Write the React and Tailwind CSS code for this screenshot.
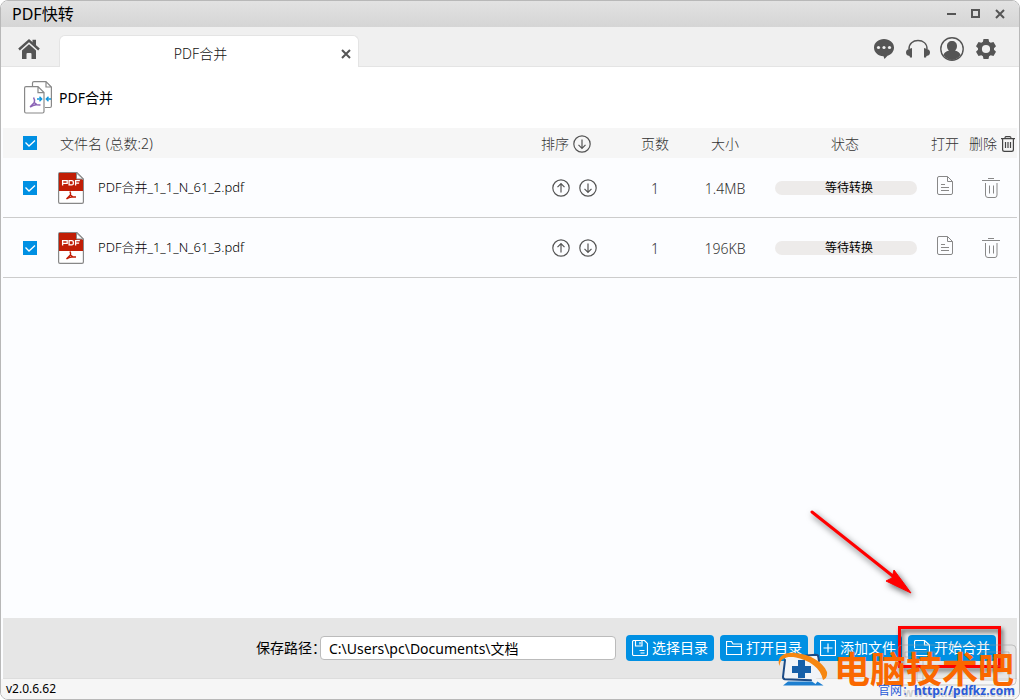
import { useState } from "react";

const files = [
  { name: "PDF合并_1_1_N_61_2.pdf", pages: 1, size: "1.4MB" },
  { name: "PDF合并_1_1_N_61_3.pdf", pages: 1, size: "196KB" },
];

function HomeIcon() {
  return (
    <svg width="22" height="22" viewBox="0 0 22 22" fill="#555">
      <path d="M1 11.500L11 2.500l10 9" fill="none" stroke="#555" strokeWidth="2.400" />
      <path d="M14.500 1.800h3.500v6l-3.500-3zM4 12.500L11 6.300l7 6.200V21h-4.500v-5q0-1-1-1h-3q-1 0-1 1v5H4z" />
    </svg>
  );
}

function ChatIcon() {
  return (
    <svg width="20" height="20" viewBox="0 0 20 20">
      <path d="M10 0C4.500 0 0 3.600 0 8.500S4 17 9.500 17.300L10.500 20l3-3.200C17.300 15.500 20 12.600 20 8.500 20 3.600 15.500 0 10 0z" fill="#555" />
      <circle cx="4.500" cy="8.500" r="1.600" fill="#f0f0f0" />
      <circle cx="10" cy="8.500" r="1.600" fill="#f0f0f0" />
      <circle cx="15.500" cy="8.500" r="1.600" fill="#f0f0f0" />
    </svg>
  );
}

function HeadsetIcon() {
  return (
    <svg width="24" height="20" viewBox="0 0 24 20" fill="#555">
      <path d="M3 10C3 4.500 7 1.600 12 1.600S21 4.500 21 10" fill="none" stroke="#555" strokeWidth="1.500" />
      <path d="M6 9v9.500H4L3.500 17Q0 16.500 0 13.500T3 10zM18 9v9.500h2l.5-1.500q3.500-.5 3.500-3.500T21 10z" />
    </svg>
  );
}

function UserIcon() {
  return (
    <svg width="24" height="24" viewBox="0 0 24 24" fill="#555">
      <circle cx="12" cy="12" r="11.200" fill="none" stroke="#555" strokeWidth="1.400" />
      <path d="M12 4c3 0 5 2 5 5 0 2-.8 3.600-2 4.500 3 .7 5 2.300 5.500 4.500A11 11 0 0 1 12 23a11 11 0 0 1-8.500-5c.5-2.200 2.500-3.800 5.500-4.500C7.800 12.600 7 11 7 9c0-3 2-5 5-5z" />
    </svg>
  );
}

function GearIcon() {
  return (
    <svg width="20" height="20" viewBox="0 0 20 20">
      <path fillRule="evenodd" fill="#555" d="M7.500 0h5l.6 2.800 1.600.9L17.500 3 20 7.200l-2 2v1.600l2 2-2.500 4.200-2.800-.7-1.600.9-.6 2.800h-5l-.6-2.800-1.600-.9-2.800.7L0 12.800l2-2V9.200l-2-2L2.500 3l2.800.7 1.600-.9zM10 5.900a4.100 4.100 0 1 0 0 8.200 4.100 4.100 0 0 0 0-8.200z" />
    </svg>
  );
}

function MergeIcon() {
  return (
    <svg width="28" height="33" viewBox="0 0 28 33" fill="none" stroke="#888" strokeWidth="1.200">
      <path d="M8.500 5V2Q8.500.600 10 .600h12L27.400 6v19q0 1.500-1.400 1.500h-5M22 .600V6h5.400" />
      <path d="M14 5.600H2q-1.400 0-1.400 1.400v23.500q0 1.500 1.400 1.500h16.500q1.500 0 1.500-1.500V11.600zM14 5.600v6h6" />
      <path d="M9.500 16.500q1.500 2 .8 5L6 26M10.300 21.500l2.500 2.200 3.700.3M6 26l3-1.500 4-1" stroke="#8b63b5" strokeWidth="1.400" />
      <path d="M13 18h4.500M15.500 15.800l2.200 2.200-2.200 2.200M27 18h-4.500M24.500 15.800L22.300 18l2.200 2.200" stroke="#1296db" strokeWidth="1.400" />
    </svg>
  );
}

function PdfIcon() {
  return (
    <svg className="shrink-0" width="26" height="32" viewBox="0 0 26 32">
      <path d="M2 .600h17L25.400 7v23q0 1.400-1.400 1.400H2Q.600 31.400.600 30V2Q.600.600 2 .600z" fill="#fff" stroke="#888" strokeWidth="1.200" />
      <path d="M1 1h17l7 7v11H1z" fill="#c11e06" />
      <path d="M18.500 1v6H25z" fill="#fff" stroke="#888" />
      <path d="M4.600 13.500V8.600h4.600v2.800H4.600M11.100 8.600v4.300h2.700q1.500 0 1.500-1.500v-1.300q0-1.500-1.500-1.500zM17.600 13.500V8.600h4.200M17.600 11.200h3.500" fill="none" stroke="#fff" strokeWidth="1.300" />
      <path d="M11.800 19.500q1.200 1.500.6 3.500L8.500 27M12.400 23l2.400 1.800 3.200.2M8.500 27l2.500-1.400 4-.8" fill="none" stroke="#c11e06" strokeWidth="1.400" />
    </svg>
  );
}

function ArrowCircle({ up = false }) {
  return (
    <svg width="18" height="18" viewBox="0 0 18 18" fill="none" stroke="#555" strokeWidth="1.200">
      <circle cx="9" cy="9" r="8.200" />
      <path d={up ? "M9 13.500V4.800M5.500 8.200L9 4.700l3.500 3.500" : "M9 4.500v8.700M5.500 9.800L9 13.300l3.500-3.500"} />
    </svg>
  );
}

function DocIcon() {
  return (
    <svg width="16" height="19" viewBox="0 0 16 19" fill="none" stroke="#888">
      <path d="M10.500.500H2Q.500.500.500 2v15q0 1.500 1.500 1.500h12q1.500 0 1.500-1.500V5.500zM10.500.500v5h5M4 8.500h4M4 11.500h8M4 14.500h8" />
    </svg>
  );
}

function TrashIcon() {
  return (
    <svg width="18" height="20" viewBox="0 0 18 20" fill="none" stroke="#888">
      <path d="M0 2.500h18M6 .500h6M3.500 5v12q0 2.500 2.500 2.500h7q2 0 2-2.500V5M7.500 7.500v8M11.500 7.500v8" />
    </svg>
  );
}

function TrashAllIcon() {
  return (
    <svg width="14" height="16" viewBox="0 0 14 16" fill="none" stroke="#444" strokeWidth="1.200">
      <path d="M0 2.600h14M4 2.600Q4 .600 5 .600h4q1 0 1 2M1.600 3v10.500q0 1.900 1.900 1.900h7q1.900 0 1.900-1.900V3M4.500 6v6M7 6v6M9.500 6v6" />
    </svg>
  );
}

function ToolIcon({ d }) {
  return (
    <svg className="shrink-0" width="16" height="16" viewBox="0 0 16 16" fill="none" stroke="#fff" strokeWidth="1.200">
      <path d={d} />
    </svg>
  );
}

const actions = [
  { label: "选择目录", d: "M2 .500h10.500l3 3V14q0 1.500-1.500 1.500H2Q.500 15.500.500 14V2Q.500.500 2 .500zM3.500.500V6h6.500V.500M8 2v2.500M7.500 10.500h5M8.500 13h4" },
  { label: "打开目录", d: "M.500 14.500v-13h5l1.500 2.500h8.500v10.500zM.500 6.500h15" },
  { label: "添加文件", d: "M.500.500h15v15H.500zM8 3.500v9M3.500 8h9" },
  { label: "开始合并", d: "M.500 8.500V2Q.500.500 2 .500h8.500l5 4.500v9q0 1.500-1.500 1.500H2Q.500 15.500.500 14v-2M.500 9.500h12M10.500.500v4.500h5" },
];

function Check({ label, checked, onChange }) {
  return (
    <label className="relative mx-auto block size-3.5">
      <input type="checkbox" aria-label={label} checked={checked} onChange={onChange} className="peer block size-3.5 appearance-none border border-[#0090e3] bg-white checked:bg-[#0090e3]" />
      <svg className="pointer-events-none absolute inset-0 hidden peer-checked:block" width="14" height="14" viewBox="0 0 14 14" fill="none" stroke="#fff" strokeWidth="1.300">
        <path d="M2.500 6.500l3.500 3.500 6-5.500" />
      </svg>
    </label>
  );
}

function SiteMark() {
  return (
    <svg className="shrink-0" width="50" height="36" viewBox="0 0 50 36">
      <path d="M8 5L38 2.500q2 0 2.300 2L44 24q0 2-2 2l-4 .500-2 4-4-3.500-24-1q-2 0-2-2L7 7q0-2 1-2z" fill="#f1f4f8" />
      <path d="M7 8L5 25q0 2 2 2.200l26 1M38 2.800q2 0 2.300 2L41 9M28 3.500l10-.7" fill="none" stroke="#1a4a86" strokeWidth="2" strokeLinecap="round" />
      <path d="M10 29.500h24l3.500 2.500 2-2.500 6 4H5z" fill="#1d7fd0" />
      <path d="M20 8h7v6h6v7h-6v5h-7v-5h-6v-7h6z" fill="#165fa8" />
      <path d="M1.500 14C-2 5 6 0 17 1c15 1 28 9 32 19 .5 4-1 7-4 8C43 16 31 8 18 5.500 9 4 2 6 1.500 14z" fill="#f68712" />
    </svg>
  );
}

export default function App() {
  const [checked, setChecked] = useState([true, true]);
  const all = checked.every(Boolean);
  return (
    <div className="relative flex min-h-screen flex-col overflow-hidden rounded-lg border border-[#b8b8b8] bg-[#fcfdff] font-['Noto_Sans','Noto_Sans_CJK_SC',sans-serif] text-sm text-black">
      <header className="flex h-[26px] items-center justify-between bg-linear-to-b from-[#e2e2e2] to-[#d5d5d5] pr-3.5 pl-[11px]">
        <h1 className="text-base">PDF快转</h1>
        <div className="flex items-center gap-3.5">
          <button aria-label="最小化"><svg width="10" height="10" viewBox="0 0 10 10" stroke="#555" strokeWidth="2"><path d="M0 5h9" /></svg></button>
          <button aria-label="最大化"><svg width="10" height="10" viewBox="0 0 10 10" stroke="#555" strokeWidth="2" fill="none"><path d="M1 1h7v7H1z" /></svg></button>
          <button aria-label="关闭窗口"><svg width="10" height="10" viewBox="0 0 10 10" stroke="#555" strokeWidth="2"><path d="M1 1l8 8M9 1L1 9" /></svg></button>
        </div>
      </header>

      <nav className="flex h-10 items-end justify-between border-b border-[#e4e4e4] bg-[#f0f0f0] pr-[23px] pl-[17px]">
        <div className="flex items-end">
          <button aria-label="首页" className="mr-[19px] mb-1.5"><HomeIcon /></button>
          <div className="-mb-px flex h-8 w-[300px] items-center rounded-t-md border border-b-0 border-[#e4e4e4] bg-white pt-1 pr-[7px]">
            <span className="flex-1 text-center font-light text-[#111]">PDF合并</span>
            <button aria-label="关闭标签"><svg width="10" height="10" viewBox="0 0 10 10" stroke="#555" strokeWidth="2"><path d="M1 1l8 8M9 1L1 9" /></svg></button>
          </div>
        </div>
        <div className="mb-[5px] flex items-center gap-2.5">
          <button aria-label="消息" className="mr-0.5"><ChatIcon /></button>
          <button aria-label="客服"><HeadsetIcon /></button>
          <button aria-label="用户" className="mr-0.5"><UserIcon /></button>
          <button aria-label="设置"><GearIcon /></button>
        </div>
      </nav>

      <main className="flex-1">
        <div className="flex h-[61px] items-center gap-[7px] bg-white pl-[23px]">
          <MergeIcon />
          <h2>PDF合并</h2>
        </div>
        <div className="px-0.5">
          <table className="w-full table-fixed border-separate border-spacing-0 font-light text-[#333]">
            <colgroup>
              <col className="w-[54px]" />
              <col />
              <col className="w-[90px]" />
              <col className="w-[70px]" />
              <col className="w-[70px]" />
              <col className="w-[170px]" />
              <col className="w-[30px]" />
              <col className="w-[57px]" />
            </colgroup>
            <thead>
              <tr className="h-[30px] bg-[#f6f6f6] whitespace-nowrap">
                <th className="p-0"><Check label="全选" checked={all} onChange={() => setChecked([!all, !all])} /></th>
                <th className="p-0 pt-0.5 pl-[3px] text-left font-light">文件名 (总数:2)</th>
                <th className="p-0 pt-0.5 font-light">
                  <button className="flex items-center gap-1 pl-[11px]">排序<ArrowCircle /></button>
                </th>
                <th className="p-0 pt-0.5 font-light">页数</th>
                <th className="p-0 pt-0.5 font-light">大小</th>
                <th className="p-0 pt-0.5 font-light">状态</th>
                <th className="p-0 pt-0.5 font-light">打开</th>
                <th className="p-0 pt-0.5 font-light">
                  <button className="ml-auto flex items-center gap-1 pr-0.5">删除<TrashAllIcon /></button>
                </th>
              </tr>
            </thead>
            <tbody>
              {files.map((file, i) => (
                <tr key={file.name} className="h-[60px] *:border-b *:border-[#ccc]">
                  <td className="p-0"><Check label={file.name} checked={checked[i]} onChange={() => setChecked(checked.map((c, j) => (j === i ? !c : c)))} /></td>
                  <td className="p-0">
                    <div className="flex items-center gap-3.5 pl-px text-[13px] text-black"><PdfIcon />{file.name}</div>
                  </td>
                  <td className="p-0">
                    <div className="flex justify-center gap-[9px] pr-px">
                      <button aria-label="上移"><ArrowCircle up /></button>
                      <button aria-label="下移"><ArrowCircle /></button>
                    </div>
                  </td>
                  <td className="p-0 pt-0.5 text-center">{file.pages}</td>
                  <td className="p-0 pt-0.5 text-center">{file.size}</td>
                  <td className="p-0"><div className="mr-[13px] ml-[15px] h-3.5 rounded-full bg-[#edebea] pl-1.5 text-center text-xs leading-[14px] font-normal text-black">等待转换</div></td>
                  <td className="p-0 pb-1"><button aria-label="打开" className="mx-auto block"><DocIcon /></button></td>
                  <td className="p-0 pl-1"><button aria-label="删除" className="mx-auto block"><TrashIcon /></button></td>
                </tr>
              ))}
            </tbody>
          </table>
        </div>
      </main>

      <footer>
        <div className="mx-0.5 flex h-[61px] items-center justify-end gap-1.5 border-b border-[#ddd] bg-[#e6e6e6] pr-[21px]">
          <div className="mr-1 flex items-center">
            <label htmlFor="path" className="w-16 whitespace-nowrap">保存路径：</label>
            <input id="path" defaultValue="C:\Users\pc\Documents\文档" className="relative h-6 w-[296px] rounded border border-[#bbb] bg-white px-2" />
          </div>
          {actions.map((a) => (
            <button key={a.label} className="flex h-[26px] w-[88px] items-center justify-center gap-1 rounded bg-[#0090e3] whitespace-nowrap text-white">
              <ToolIcon d={a.d} />{a.label}
            </button>
          ))}
        </div>
        <div className="flex h-5 items-center bg-[#f6f6f6] pl-[5px] text-xs">v2.0.6.62</div>
      </footer>

      <svg className="pointer-events-none absolute right-[99px] bottom-[89px] drop-shadow-[2px_3px_3px_rgba(0,0,0,0.6)]" width="110" height="100" viewBox="0 0 110 100">
        <path d="M2 2L84 67" stroke="#f00" strokeWidth="3" strokeLinecap="round" />
        <path d="M101 83L76 71l6-3 2-8z" fill="#f00" stroke="#f00" />
      </svg>
      <div className="pointer-events-none absolute right-[18px] bottom-[31px] h-[42px] w-[103px] border-3 border-[#f00] drop-shadow-[2px_3px_2px_rgba(0,0,0,0.6)]" />
      <svg className="pointer-events-none absolute right-0.5 bottom-[13px]" width="120" height="42" viewBox="0 0 120 42" fill="none" stroke="#999" strokeOpacity="0.5">
        <rect x="1" y="1" width="118" height="40" rx="4" />
        <path d="M8 8h30v5H26v24h-6V13H8zM84 8h28v28H84zM90 14h16v8H90z" />
      </svg>
      <div className="pointer-events-none absolute right-1 bottom-0 text-xs leading-3 font-bold text-[#999]/40">www.xiazaiba.com</div>
      <div className="pointer-events-none absolute right-[5px] bottom-[11px] flex items-center gap-1.5 text-[36px] leading-9 font-bold whitespace-nowrap text-[#fa6800]">
        <SiteMark />电脑技术吧
      </div>
      <a href="http://pdfkz.com" className="absolute right-1 bottom-0 text-xs leading-4 whitespace-nowrap text-[#2a5bd8]">官网：<b>http://pdfkz.com</b></a>
    </div>
  );
}
